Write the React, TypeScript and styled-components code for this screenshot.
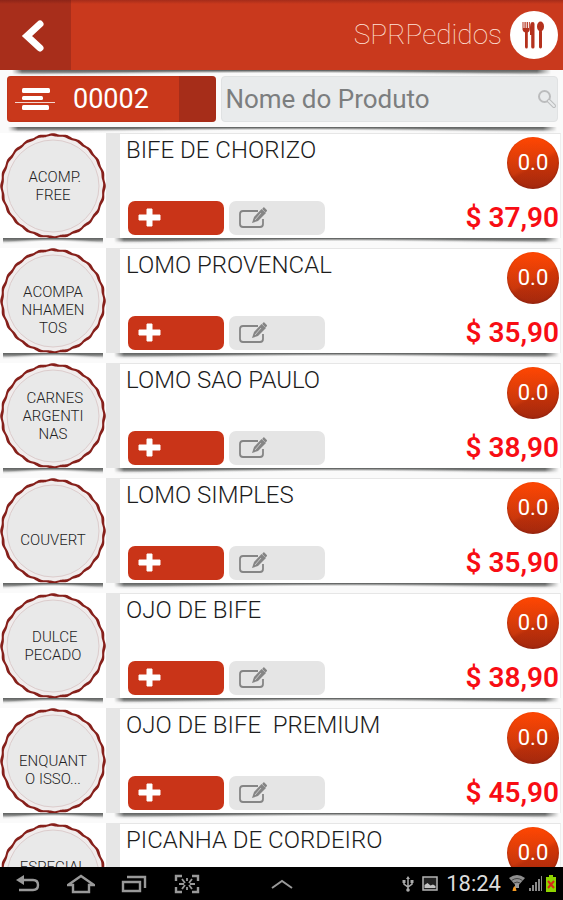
import React, { useState } from "react";
import styled, { createGlobalStyle } from "styled-components";

const GlobalStyle = createGlobalStyle`
  *, *::before, *::after { box-sizing: border-box; }
  body { margin: 0; background: #fafafa; font-family: Roboto, "Liberation Sans", sans-serif; }
  button, input { font: inherit; border: 0; padding: 0; margin: 0; }
  button { cursor: pointer; }
  ul { list-style: none; margin: 0; padding: 0; }
`;

const Screen = styled.div`
  display: flex;
  flex-direction: column;
  height: 100vh;
  overflow: hidden;
`;

const Header = styled.header`
  display: flex;
  align-items: stretch;
  height: 70px;
  flex: none;
  background: linear-gradient(#a52c1a 0, #c9391d 4px);
`;

const BackButton = styled.button`
  width: 71px;
  display: flex;
  align-items: center;
  justify-content: center;
  padding: 2px 6px 0 0;
  background: linear-gradient(#8d2418 0, #a82e1b 4px);
`;

const Brand = styled.div`
  flex: 1;
  display: flex;
  align-items: center;
  justify-content: flex-end;
  gap: 8px;
  padding-right: 5px;
`;

const BrandName = styled.h1`
  margin: 0;
  color: #ffe2d8;
  font-size: 28px;
  line-height: 36px;
  font-weight: 100;
`;

const Shade = styled.div<{ $start: number; $end: number }>`
  height: 6px;
  flex: none;
  margin: 0 ${(p) => p.$end}px 0 ${(p) => p.$start}px;
  background:
    radial-gradient(ellipse 50% 90% at 50% 100%, #fafafa 50%, rgba(250, 250, 250, 0) 100%),
    linear-gradient(#5f6160 0, #7d7f7e 35%, rgba(190, 190, 190, 0.4) 75%, rgba(250, 250, 250, 0));
  mask-image: linear-gradient(90deg, transparent, #000 10px, #000 calc(100% - 14px), transparent);
`;

const CategoryShade = styled(Shade)`
  mask-image: none;
`;

const SearchBar = styled.form`
  display: flex;
  flex: none;
  gap: 5px;
  height: 51px;
  padding: 0 5px 5px 7px;
`;

const OrderButton = styled.button`
  flex: 0 0 38%;
  display: flex;
  align-items: center;
  gap: 18px;
  padding-left: 8px;
  border-radius: 4px;
  color: #fff;
  font-size: 27px;
  line-height: 32px;
  background: linear-gradient(90deg, #c9381b calc(100% - 37px), #a62d19 calc(100% - 37px));
  box-shadow: inset 0 0 2px #a62d19;
`;

const SearchField = styled.label`
  flex: 1;
  min-width: 0;
  display: flex;
  align-items: center;
  padding-left: 3px;
  border-radius: 4px;
  background: #e9ebec;
  border: 1px solid #e0e2e3;
`;

const SearchInput = styled.input`
  flex: 1;
  min-width: 0;
  background: transparent;
  color: #444;
  font-size: 26px;
  line-height: 32px;
  outline: none;
  &::placeholder { color: #7c7e7f; opacity: 1; }
`;

const Content = styled.main`
  flex: 1;
  min-height: 0;
  display: flex;
  overflow: hidden;
`;

const CategoryList = styled.ul`
  width: 106px;
  flex: none;
`;

const ProductList = styled.ul`
  flex: 1;
  min-width: 0;
`;

const Entry = styled.li`
  display: flex;
  flex-direction: column;
  height: 115px;
`;

const CategoryButton = styled.button`
  display: grid;
  place-items: center;
  height: 105px;
  width: 106px;
  flex: none;
  background: #fff;
  & > * { grid-area: 1 / 1; }
`;

const CategoryName = styled.span`
  color: #222;
  font-size: 15px;
  line-height: 18px;
  font-weight: 300;
  white-space: pre;
  text-align: center;
`;

const Card = styled.article`
  display: grid;
  grid-template-columns: 1fr auto;
  grid-template-rows: 1fr auto;
  height: 105px;
  flex: none;
  margin-right: 2px;
  padding: 2px 1px 3px 6px;
  background: #fff;
  border-left: 14px solid #e6e6e6;
  border-top: 1px solid #e6e6e6;
  border-right: 1px solid #eee;
`;

const ProductName = styled.h2`
  margin: 0;
  color: #1c1c1c;
  font-size: 24px;
  line-height: 28px;
  font-weight: 300;
  white-space: pre;
`;

const Quantity = styled.output`
  justify-self: end;
  width: 52px;
  height: 52px;
  margin-top: 1px;
  border-radius: 50%;
  color: #fff;
  font-size: 22px;
  line-height: 52px;
  text-align: center;
  background:
    linear-gradient(150deg, rgba(255, 90, 20, 0.12) 50%, rgba(120, 20, 0, 0.12) 56%),
    linear-gradient(#ff4400, #a92b10);
  box-shadow: inset 0 -1px 2px #8f2410;
`;

const Actions = styled.div`
  display: flex;
  gap: 5px;
  padding-left: 2px;
`;

const ActionButton = styled.button<{ $primary?: boolean }>`
  width: 96px;
  height: 34px;
  border-radius: 7px;
  display: flex;
  align-items: center;
  padding-left: 10px;
  background: ${(p) => (p.$primary ? "#c93418" : "#e5e5e5")};
`;

const Price = styled.strong`
  align-self: center;
  color: #f80d14;
  font-size: 28px;
  line-height: 32px;
  font-weight: 600;
`;

const SystemBar = styled.nav`
  display: flex;
  align-items: center;
  flex: none;
  height: 33px;
  padding: 0 6px 0 14px;
  background: #000;
`;

const SystemKeys = styled.div`
  flex: 1;
  display: grid;
  grid-template-columns: repeat(4, 28px) 1fr;
  gap: 25px;
`;

const SystemKey = styled.button`
  display: flex;
  align-items: center;
  justify-content: center;
  background: transparent;
  &:last-child { justify-content: flex-start; padding-left: 45px; }
`;

const Status = styled.div`
  display: flex;
  align-items: center;
  gap: 8px;
`;

const Clock = styled.time`
  color: #dcdcdc;
  font-size: 22px;
  line-height: 26px;
`;

/* Closed wavy outline around (53, 53). */
function wave(radius: number, depth: number, phase: number) {
  const points: string[] = [];
  for (let i = 0; i < 288; i++) {
    const a = (i / 288) * Math.PI * 2;
    const r = radius + depth * Math.cos(24 * a + phase);
    points.push(`${(53 + r * Math.cos(a)).toFixed(2)} ${(53 + r * Math.sin(a)).toFixed(2)}`);
  }
  return `M${points.join("L")}Z`;
}
const outerWave = wave(52.3, 0.5, 0);
const innerWave = wave(49.8, 0.4, 0.9);

const Seal = () => (
  <svg width="106" height="106" viewBox="0 0 106 106" aria-hidden="true">
    <path d={outerWave} fill="#86201b" />
    <path d={innerWave} fill="#f0ecec" />
    <circle cx="53" cy="53" r="46" fill="#e9e9e9" stroke="#dccccc" />
  </svg>
);

const BackIcon = () => (
  <svg width="24" height="34" viewBox="0 0 24 34" aria-hidden="true">
    <path d="M19 5 6 17l13 12" fill="none" stroke="#fff" strokeWidth="7" strokeLinejoin="miter" strokeLinecap="round" />
  </svg>
);

const BrandIcon = () => (
  <svg width="48" height="50" viewBox="0 0 48 50" aria-hidden="true">
    <circle cx="24" cy="25" r="24" fill="#fff" />
    <g fill="#b4311d">
      <path d="M12.5 12h1v6h1v-6h1.2v6h1v-6h1.2v6h1v-6h.9v7.5q0 2-2 3V37q0 1.500-1.300 1.500T15 37V22.500q-2.500-1-2.500-3Z" />
      <path d="M21 12.500q3.500-1.500 3.500 1.500v23q0 1.500-1.600 1.500T21.200 37V25H20v-8q0-3 1-4.500Z" />
      <ellipse cx="30.500" cy="16.500" rx="3.500" ry="5" />
      <rect x="29" y="20" width="3" height="18.500" rx="1.400" />
    </g>
  </svg>
);

const ListIcon = () => (
  <svg width="40" height="26" viewBox="0 0 40 26" aria-hidden="true">
    <g fill="#fff">
      <rect x="7" y="2" width="28" height="5" rx="1.500" />
      <rect x="7" y="10" width="21" height="4" rx="1.500" />
      <rect x="7" y="19" width="27" height="5" rx="1.500" />
      <rect x="0" y="16" width="40" height="1" opacity=".8" />
    </g>
  </svg>
);

const SearchIcon = () => (
  <svg width="20" height="20" viewBox="0 0 20 20" aria-hidden="true">
    <circle cx="7.500" cy="7.500" r="5.500" fill="none" stroke="#bbbcbd" strokeWidth="2" />
    <path d="m12 12 5 5" stroke="#bbbcbd" strokeWidth="4" strokeLinecap="round" />
    <path d="m12 12 5 5" stroke="#e9ebec" strokeWidth="2" strokeLinecap="round" />
  </svg>
);

const PlusIcon = () => (
  <svg width="23" height="20" viewBox="0 0 23 20" aria-hidden="true">
    <path d="M9 1h5v6h8v5h-8v6H9v-6H1V7h8Z" fill="#fff" stroke="#fff" strokeLinejoin="round" />
  </svg>
);

const EditIcon = () => (
  <svg width="28" height="22" viewBox="0 0 28 22" aria-hidden="true">
    <path d="M19 4H4Q1 4 1 7v10q0 3 3 3h17q3 0 3-3v-5" fill="none" stroke="#858585" strokeWidth="1.800" />
    <path d="m13 16 2-6 7.500-8 4.500 4-8 8Z" fill="#858585" />
    <path d="m16 13 6-7" stroke="#d8d8d8" strokeWidth=".8" />
    <path d="m24 1 3.500 3.500" stroke="#858585" strokeWidth="2.500" />
  </svg>
);

const keyStroke = { fill: "none", stroke: "#999", strokeWidth: 2.4 };

const systemKeys = [
  {
    label: "Voltar",
    icon: (
      <svg width="26" height="20" viewBox="0 0 26 20">
        <path d="M5 6h13q5 0 5 5t-5 5H4" {...keyStroke} />
        <path d="m1 6 8-5v10Z" fill="#999" />
      </svg>
    ),
  },
  {
    label: "Início",
    icon: (
      <svg width="28" height="20" viewBox="1 0 28 20">
        <path d="M2 11 15 2l13 9h-5v7H7v-7Z" {...keyStroke} />
      </svg>
    ),
  },
  {
    label: "Recentes",
    icon: (
      <svg width="26" height="20" viewBox="0 0 26 20">
        <path d="M2 8h17v9H2Z" {...keyStroke} />
        <path d="M6 3h18v11" {...keyStroke} />
      </svg>
    ),
  },
  {
    label: "Captura",
    icon: (
      <svg width="26" height="20" viewBox="0 0 26 20">
        <path d="M2 7V2h6M18 2h6v5M24 13v5h-6M8 18H2v-5" {...keyStroke} />
        <path d="m8 5 3 4M18 5l-3 4M8 15l3-4M18 15l-3-4M13 4v3M13 13v3M5 10h5M16 10h5" stroke="#999" strokeWidth="1.800" />
      </svg>
    ),
  },
  {
    label: "Expandir",
    icon: (
      <svg width="22" height="12" viewBox="0 0 22 12">
        <path d="m1 10 10-7 10 7" fill="none" stroke="#999" strokeWidth="2" />
      </svg>
    ),
  },
];

const UsbIcon = () => (
  <svg width="12" height="16" viewBox="0 0 12 16" aria-hidden="true">
    <path d="M6 2v12M2 5v3l4 3 4-3V5" fill="none" stroke="#aaa" strokeWidth="1.500" />
    <path d="m6 0 2 3H4ZM.5 4h3v3h-3ZM8.500 4h3v3h-3Z" fill="#aaa" />
    <circle cx="6" cy="14" r="1.800" fill="#aaa" />
  </svg>
);

const PictureIcon = () => (
  <svg width="16" height="16" viewBox="0 0 16 16" aria-hidden="true">
    <rect x="1" y="1" width="14" height="13" fill="#222" stroke="#b5b5b5" strokeWidth="1.500" />
    <path d="M2.500 12V9l3-2 3 2.500 2.500-1 2.500 1.500v2Z" fill="#c4c4c4" />
  </svg>
);

const SignalIcons = () => (
  <svg width="48" height="20" viewBox="0 0 48 20" aria-hidden="true">
    <path d="M0 4q8-6 16 0l-8 9Z" fill="#8f8f8f" />
    <path d="M2.500 6.500q5.500-4 11 0M5 9q3-2 6 0" fill="none" stroke="#444" />
    <path d="M6 10h4v4H6Z" fill="#999" />
    <path d="M3.500 17q0-3 2-5 2 2 2 5Z" fill="#f59a23" />
    <path d="M20 17v-3h2v3ZM23 17v-6h2v6ZM26 17V8h2v9ZM29 17V5h2v12ZM32 17V2h1v15Z" fill="#8a8a8a" />
    <path d="M40 1h4v2h3v15H37V3h3Z" fill="#8fd400" />
    <path d="m39 7 6 7M45 7l-6 7" stroke="#d8281a" strokeWidth="2" />
  </svg>
);

const categories = [
  " ACOMP.\nFREE",
  "\nACOMPA\nNHAMEN\nTOS",
  " CARNES\nARGENTI\nNAS",
  "\nCOUVERT",
  " DULCE\nPECADO",
  "\nENQUANT\nO ISSO...",
  "ESPECIAL\n ",
];

const products: { name: string; price?: string }[] = [
  { name: "BIFE DE CHORIZO", price: "37,90" },
  { name: "LOMO PROVENCAL", price: "35,90" },
  { name: "LOMO SAO PAULO", price: "38,90" },
  { name: "LOMO SIMPLES", price: "35,90" },
  { name: "OJO DE BIFE", price: "38,90" },
  { name: "OJO DE BIFE  PREMIUM", price: "45,90" },
  { name: "PICANHA DE CORDEIRO" },
];

export default function App() {
  const [counts, setCounts] = useState<number[]>(products.map(() => 0));
  const add = (index: number) => setCounts(counts.map((c, i) => (i === index ? c + 1 : c)));

  return (
    <Screen>
      <GlobalStyle />
      <Header>
        <BackButton aria-label="Voltar ao menu"><BackIcon /></BackButton>
        <Brand>
          <BrandName>SPRPedidos</BrandName>
          <BrandIcon />
        </Brand>
      </Header>
      <Shade $start={12} $end={12} />
      <SearchBar onSubmit={(e) => e.preventDefault()}>
        <OrderButton type="button"><ListIcon />00002</OrderButton>
        <SearchField>
          <SearchInput type="text" aria-label="Nome do Produto" placeholder="Nome do Produto" />
          <SearchIcon />
        </SearchField>
      </SearchBar>
      <Shade $start={8} $end={6} />
      <Content>
        <CategoryList>
          {categories.map((name) => (
            <Entry key={name}>
              <CategoryButton>
                <Seal />
                <CategoryName>{name}</CategoryName>
              </CategoryButton>
              <CategoryShade $start={3} $end={3} />
            </Entry>
          ))}
        </CategoryList>
        <ProductList>
          {products.map((product, index) => (
            <Entry key={product.name}>
              <Card>
                <ProductName>{product.name}</ProductName>
                <Quantity>{counts[index].toFixed(1)}</Quantity>
                <Actions>
                  <ActionButton $primary aria-label={`Adicionar ${product.name}`} onClick={() => add(index)}>
                    <PlusIcon />
                  </ActionButton>
                  <ActionButton aria-label={`Editar ${product.name}`}><EditIcon /></ActionButton>
                </Actions>
                {product.price && <Price>$ {product.price}</Price>}
              </Card>
              <Shade $start={8} $end={4} />
            </Entry>
          ))}
        </ProductList>
      </Content>
      <SystemBar>
        <SystemKeys>
          {systemKeys.map((key) => (
            <SystemKey key={key.label} aria-label={key.label}>{key.icon}</SystemKey>
          ))}
        </SystemKeys>
        <Status>
          <UsbIcon />
          <PictureIcon />
          <Clock>18:24</Clock>
          <SignalIcons />
        </Status>
      </SystemBar>
    </Screen>
  );
}
